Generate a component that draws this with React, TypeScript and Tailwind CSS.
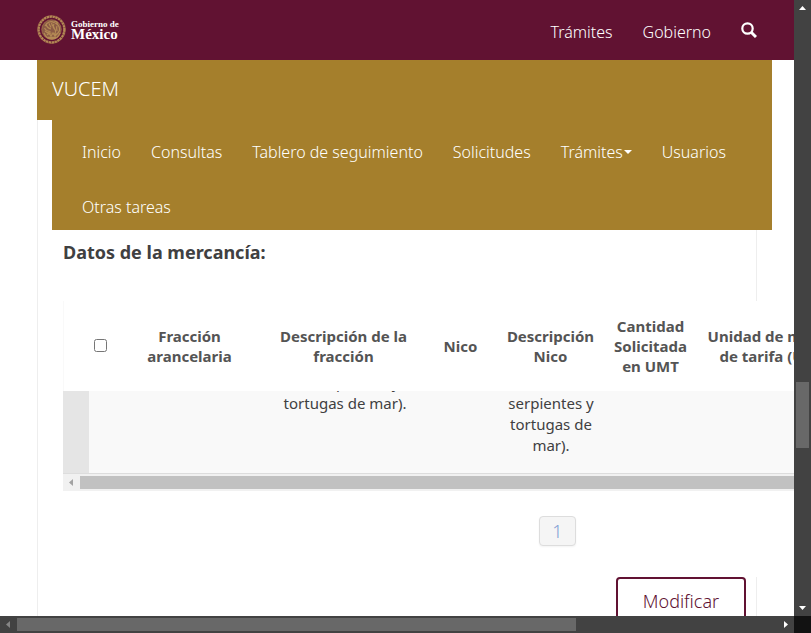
import React from "react";

type Direction = "up" | "down" | "left" | "right";

const arrowPoints: Record<Direction, string> = {
  up: "1,6 4.5,2 8,6",
  down: "1,3 4.5,7 8,3",
  left: "6,1 2,4.5 6,8",
  right: "3,1 7,4.5 3,8",
};

function Arrow({ direction, className }: { direction: Direction; className: string }) {
  return (
    <svg viewBox="0 0 9 9" className={`size-[9px] shrink-0 fill-current ${className}`} aria-hidden="true">
      <polygon points={arrowPoints[direction]} />
    </svg>
  );
}

function Emblem() {
  return (
    <svg viewBox="0 0 30 30" className="size-[30px]" fill="none" stroke="#b48a55" aria-hidden="true">
      <circle cx="14.500" cy="14.500" r="12.8" strokeWidth="2.2" strokeDasharray="2.4 .5" />
      <circle cx="14.500" cy="14.500" r="14" strokeWidth=".5" />
      <circle cx="14.500" cy="14.500" r="9.800" strokeWidth=".5" fill="#8a5a45" />
      <path
        d="M8 11c2-4 6-5.500 9-3.500 1-1.500 3-1 3.500.5l-1.500.5c2.500 1.500 4 4 3.500 7-1 3-3 4-5 4.500M9 9.500c1 3 2.500 4 5 4.500M7.500 13c1.500 2.500 3.500 3.500 6 3.500M8 16c2 2 4 2.500 6.500 2M17 9c-1.500 2-1 3.500.5 5s1.500 4-.5 5.500M20 11c-1 2 0 3.500 0 5M12 8.500l2 4M14.500 8l1 3"
        strokeWidth="1.200"
      />
      <path d="M7 18c1.500 4 4.500 6 8 6s6.500-2 8-6M10 20l2-2 2 3 2-3 2 3 2-2M11 22.500h8" strokeWidth="1.300" />
    </svg>
  );
}

const menu = ["Inicio", "Consultas", "Tablero de seguimiento", "Solicitudes", "Trámites", "Usuarios", "Otras tareas"];

function Columns() {
  return (
    <colgroup>
      <col className="w-[26px]" />
      <col className="w-[22px]" />
      <col className="w-[156px]" />
      <col className="w-[152px]" />
      <col className="w-[82px]" />
      <col className="w-[98px]" />
      <col className="w-[102px]" />
      <col className="w-[148px]" />
      <col />
    </colgroup>
  );
}

function GoodsTable() {
  return (
    <div className="relative w-[989px] bg-white">
      <table className="h-[90px] w-full table-fixed border-l border-[#f9f9f9] text-center text-[15px] leading-5 font-bold text-[#545454]">
        <Columns />
        <thead>
          <tr>
            <td />
            <th className="pb-[2px]">
              <input type="checkbox" aria-label="Seleccionar todo" className="mx-auto block size-[13px]" />
            </th>
            <th className="px-8">Fracción arancelaria</th>
            <th className="px-2">Descripción de la fracción</th>
            <th>Nico</th>
            <th className="px-1">Descripción Nico</th>
            <th className="px-3">Cantidad Solicitada en UMT</th>
            <th className="px-1">Unidad de medida de tarifa (UMT)</th>
            <td />
          </tr>
        </thead>
      </table>
      <div className="flex h-[83px] items-end overflow-hidden border-b border-[#ddd]">
        <table className="w-full table-fixed bg-[#f9f9f9] text-center text-[15px] leading-[21px] text-[#404041]">
          <Columns />
          <tbody>
            <tr className="align-top">
              <td className="bg-[#e5e5e5]" />
              <td />
              <td />
              <td className="pt-2 pr-2 pb-[17px] pl-3">las serpientes y tortugas de mar).</td>
              <td />
              <td className="pt-2 pr-1 pb-[17px] pl-[6px]">las serpientes y tortugas de mar).</td>
              <td />
              <td />
              <td />
            </tr>
          </tbody>
        </table>
      </div>
      <div className="flex h-[17px] items-center bg-[#f1f1f1]">
        <Arrow direction="left" className="mx-1 text-[#a3a3a3]" />
        <div className="h-[13px] flex-1 bg-[#c1c1c1]" />
      </div>
      <div className="flex justify-center pt-[25px] pb-[31px]">
        <button className="h-[30px] w-[37px] rounded-[4px] border border-[#ddd] bg-[#f5f5f5] text-lg leading-7 font-light text-[#7f9fd4] shadow-xs">
          1
        </button>
      </div>
    </div>
  );
}

export default function App() {
  return (
    <div className="flex h-screen flex-col overflow-hidden bg-white font-['Noto_Sans',sans-serif] text-[#404041]">
      <div className="flex min-h-0 flex-1">
        <main className="min-w-0 flex-1 overflow-hidden">
          <header className="flex h-[60px] items-center justify-between bg-[#611232] pr-[37px] pl-[37px] text-white">
            <a href="#" className="flex items-center gap-1">
              <Emblem />
              <span className="flex flex-col font-['Liberation_Serif',serif] font-bold">
                <span className="text-[9px] leading-[8px]">Gobierno de</span>
                <span className="text-[15px] leading-[12px]">México</span>
              </span>
            </a>
            <nav className="flex items-center gap-[30px] pt-1 text-base font-light">
              <a href="#">Trámites</a>
              <a href="#">Gobierno</a>
              <a href="#" aria-label="Buscar" className="pb-1">
                <svg viewBox="0 0 16 16" className="size-4" fill="none" stroke="currentColor" aria-hidden="true">
                  <circle cx="6.500" cy="6.500" r="5.200" strokeWidth="2.200" />
                  <path d="M10.200 10.200l4.800 4.800" strokeWidth="3" />
                </svg>
              </a>
            </nav>
          </header>

          <div className="mr-[22px] ml-[37px]">
            <div className="h-[60px] bg-[#a57f2c] px-[15px] pt-[14px] text-xl leading-[30px] font-light text-white">
              <a href="#">VUCEM</a>
            </div>
            <div className="border-l border-[#eee] pl-[14px]">
              <nav className="bg-[#a57f2c] px-[30px] text-base font-light text-white">
                <ul className="flex flex-wrap gap-x-[30px]">
                  {menu.map((item, index) => (
                    <li key={item}>
                      <a href="#" className="flex h-[55px] items-center pt-2">
                        {item}
                        {index === 4 && (
                          <svg viewBox="0 0 8 4" className="ml-px h-1 w-2 fill-current" aria-hidden="true">
                            <path d="M0 0h8L4 4z" />
                          </svg>
                        )}
                      </a>
                    </li>
                  ))}
                </ul>
              </nav>
            </div>
          </div>

          <section className="mr-[37px] ml-[37px] border-x border-[#eee] pl-[25px]">
            <h2 className="h-[71px] pt-2 text-lg leading-7 font-bold">Datos de la mercancía:</h2>
            <GoodsTable />
            <div className="flex justify-end pr-[10px]">
              <button className="h-12 w-[130px] rounded-[4px] border-2 border-[#611232] bg-white text-lg font-light text-[#611232]">
                Modificar
              </button>
            </div>
          </section>
        </main>

        <aside className="flex w-[17px] shrink-0 flex-col items-center bg-[#424242] py-1 text-white">
          <Arrow direction="up" className="" />
          <div className="flex w-full flex-1 flex-col items-center">
            <div className="flex-[369]" />
            <div className="h-[66px] w-[13px] bg-[#686868]" />
            <div className="flex-[155]" />
          </div>
          <Arrow direction="down" className="" />
        </aside>
      </div>

      <footer className="flex h-[17px] shrink-0 bg-[#424242]">
        <div className="flex flex-1 items-center px-1">
          <Arrow direction="left" className="mr-1 text-[#858585]" />
          <div className="h-[13px] flex-[559] bg-[#686868]" />
          <div className="flex-[205]" />
          <Arrow direction="right" className="text-white" />
        </div>
        <div className="w-[17px] bg-[#121212]" />
      </footer>
    </div>
  );
}
